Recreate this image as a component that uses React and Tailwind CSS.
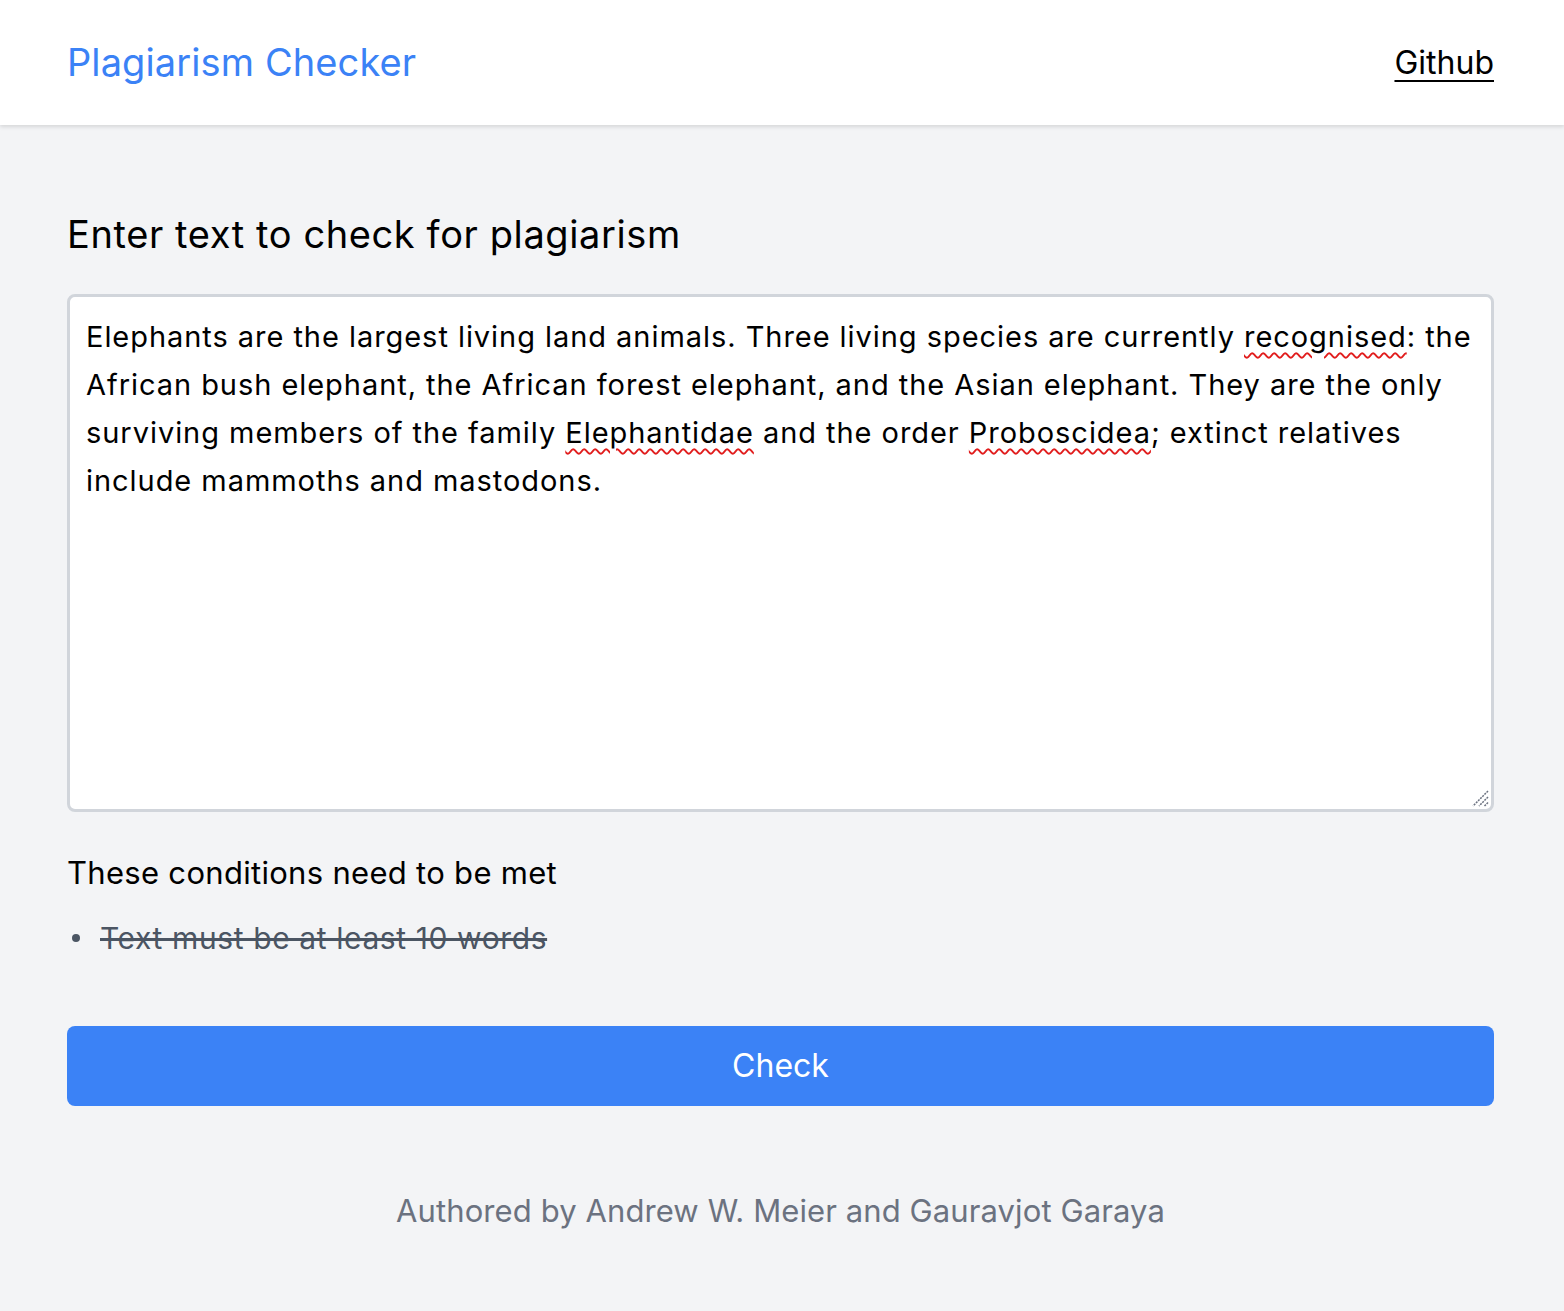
export default function App() {
  const font = { fontFamily: 'Inter, "Noto Sans", sans-serif' };
  const wavy = "underline decoration-wavy decoration-[#e11d1d] decoration-[1.5px] underline-offset-[5px]";
  return (
    <div className="min-h-[1311px] bg-[#f3f4f6] text-black" style={font}>
      <header className="bg-white h-[125px] shadow-[0_2px_4px_rgba(0,0,0,0.12)] flex items-center justify-between pl-[67px] pr-[70px] relative z-10">
        <span className="text-[38px] text-[#3b82f6] tracking-[0.1px]">Plagiarism Checker</span>
        <a href="#" className="text-[32px] underline underline-offset-[6px] decoration-2">Github</a>
      </header>
      <main className="pl-[67px] pr-[70px]">
        <h1 className="mt-[91px] text-[38px] leading-[36px] tracking-[0.6px]">Enter text to check for plagiarism</h1>
        <div className="relative mt-[42px] h-[518px] bg-white border-[3px] border-[#d1d5db] rounded-lg p-4 text-[29px] leading-[48px] tracking-[0.95px]">
          Elephants are the largest living land animals. Three living species are currently{' '}
          <span className={wavy}>recognised</span>: the African bush elephant, the African forest elephant, and the Asian elephant. They are the only surviving members of the family{' '}
          <span className={wavy}>Elephantidae</span> and the order{' '}
          <span className={wavy}>Proboscidea</span>; extinct relatives include mammoths and mastodons.
          <svg className="absolute right-[2px] bottom-[2px]" width="20" height="20" viewBox="0 0 20 20">
            <path d="M19 4 L4 19 M19 10 L10 19 M19 15.5 L15.5 19" stroke="#6b7280" strokeWidth="1.5" strokeDasharray="2 1" />
          </svg>
        </div>
        <p className="mt-[45px] text-[31px] leading-[32px] tracking-[0.3px]">These conditions need to be met</p>
        <ul className="mt-[33px] text-[30px] leading-[32px] text-[#4b5563]">
          <li className="flex items-center">
            <span className="ml-[5px] w-[8px] h-[8px] rounded-full bg-[#4b5563]"></span>
            <span className="ml-[20px] line-through tracking-[0.6px]">Text must be at least 10 words</span>
          </li>
        </ul>
        <button className="mt-[72px] w-full h-[80px] bg-[#3b82f6] rounded-lg text-white text-[32px]">Check</button>
        <p className="mt-[87px] text-center text-[31px] leading-[36px] text-[#6b7280] tracking-[0.1px]">Authored by Andrew W. Meier and Gauravjot Garaya</p>
      </main>
    </div>
  );
}
